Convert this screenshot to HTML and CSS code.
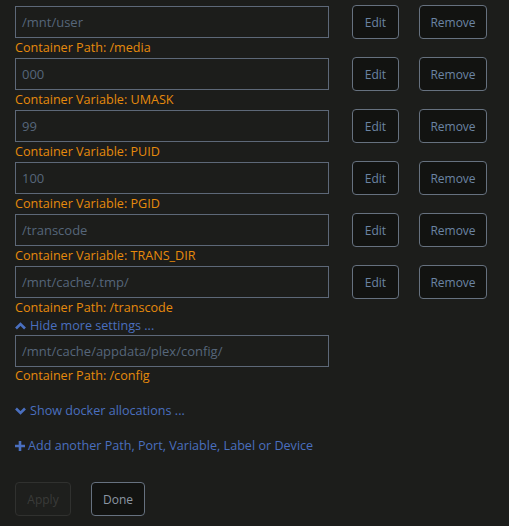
FILE: index.html
```html
<!DOCTYPE html>
<html lang="en">
<head>
  <meta charset="UTF-8">
  <title>Container settings</title>
  <link rel="stylesheet" href="styles.css">
</head>
<body>
  <div class="settings">
    <!--PATHS AND VARIABLES-->
    <div class="entry">
      <div class="entry-row">
        <div class="value">/mnt/user</div>
        <button class="btn btn-edit">Edit</button>
        <button class="btn btn-remove">Remove</button>
      </div>
      <div class="target">Container Path: /media</div>
    </div>

    <div class="entry">
      <div class="entry-row">
        <div class="value">000</div>
        <button class="btn btn-edit">Edit</button>
        <button class="btn btn-remove">Remove</button>
      </div>
      <div class="target">Container Variable: UMASK</div>
    </div>

    <div class="entry">
      <div class="entry-row">
        <div class="value">99</div>
        <button class="btn btn-edit">Edit</button>
        <button class="btn btn-remove">Remove</button>
      </div>
      <div class="target">Container Variable: PUID</div>
    </div>

    <div class="entry">
      <div class="entry-row">
        <div class="value">100</div>
        <button class="btn btn-edit">Edit</button>
        <button class="btn btn-remove">Remove</button>
      </div>
      <div class="target">Container Variable: PGID</div>
    </div>

    <div class="entry">
      <div class="entry-row">
        <div class="value">/transcode</div>
        <button class="btn btn-edit">Edit</button>
        <button class="btn btn-remove">Remove</button>
      </div>
      <div class="target">Container Variable: TRANS_DIR</div>
    </div>

    <div class="entry">
      <div class="entry-row">
        <div class="value">/mnt/cache/.tmp/</div>
        <button class="btn btn-edit">Edit</button>
        <button class="btn btn-remove">Remove</button>
      </div>
      <div class="target">Container Path: /transcode</div>
    </div>

    <a class="toggle" href="#">
      <svg width="11" height="8" viewBox="0 0 11 8"><path d="M1 6.5 L5.5 2 L10 6.5" fill="none" stroke="currentColor" stroke-width="2.6"/></svg>
      Hide more settings ...
    </a>

    <div class="entry">
      <div class="entry-row">
        <div class="value">/mnt/cache/appdata/plex/config/</div>
      </div>
      <div class="target">Container Path: /config</div>
    </div>

    <!--EXTRA LINKS-->
    <a class="toggle toggle-docker" href="#">
      <svg width="11" height="8" viewBox="0 0 11 8"><path d="M1 1.5 L5.5 6 L10 1.5" fill="none" stroke="currentColor" stroke-width="2.6"/></svg>
      Show docker allocations ...
    </a>

    <a class="toggle toggle-add" href="#">
      <svg width="10" height="10" viewBox="0 0 10 10"><path d="M5 0 V10 M0 5 H10" fill="none" stroke="currentColor" stroke-width="2.6"/></svg>
      Add another Path, Port, Variable, Label or Device
    </a>

    <div class="actions">
      <button class="btn btn-apply" disabled>Apply</button>
      <button class="btn btn-done">Done</button>
    </div>
  </div>
</body>
</html>
```

FILE: styles.css
```css
* {
  margin: 0;
  padding: 0;
  box-sizing: border-box;
}

body {
  background-color: #1c1d1b;
  font-family: 'Open Sans', 'Noto Sans', sans-serif;
  font-size: 12.6px;
  color: #8a8a8a;
}

.settings {
  padding: 5px 0 0 15px;
}

.entry-row {
  display: flex;
  align-items: center;
  height: 34px;
}

.value {
  width: 314px;
  height: 32px;
  border: 1px solid #5d6878;
  color: #56667a;
  padding: 0 6px;
  line-height: 30px;
  font-size: 13px;
}

.target {
  color: #e68a0c;
  line-height: 18px;
  height: 18px;
}

.btn {
  font-family: inherit;
  font-size: 12px;
  height: 34px;
  background-color: #121311;
  color: #6b84a3;
  border: 1px solid #66717f;
  border-radius: 4px;
  cursor: pointer;
}

.btn-edit {
  width: 47px;
  margin-left: 23px;
}

.btn-remove {
  width: 68px;
  margin-left: 20px;
}

.toggle {
  display: flex;
  align-items: center;
  gap: 4px;
  height: 18px;
  line-height: 18px;
  color: #4a6fbf;
  text-decoration: none;
}

.toggle + .entry .entry-row {
  height: 32px;
}

.toggle-docker {
  margin-top: 17px;
}

.toggle-add {
  margin-top: 17px;
  gap: 3px;
}

.actions {
  display: flex;
  gap: 20px;
  margin-top: 27px;
}

.btn-apply {
  width: 56px;
  background-color: #1e1f1d;
  border-color: #30312f;
  color: #3a3b39;
  cursor: default;
}

.btn-done {
  width: 54px;
  color: #8c97a3;
}
```
